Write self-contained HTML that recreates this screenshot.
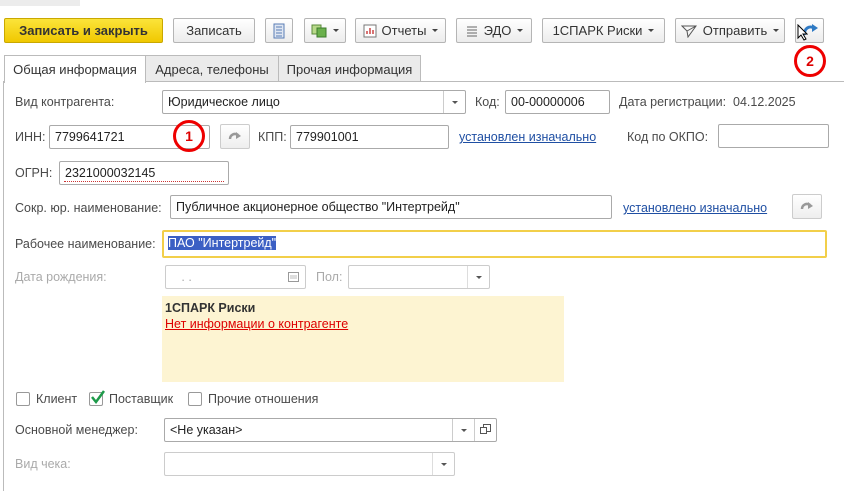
<!DOCTYPE html>
<html><head><meta charset="utf-8"><style>
*{box-sizing:border-box;margin:0;padding:0}
body{width:844px;height:491px;background:#fff;font-family:"Liberation Sans",sans-serif;font-size:12px;color:#333;position:relative;overflow:hidden}
.a{position:absolute}
.btn{position:absolute;top:18px;height:25px;border:1px solid #b5b5b5;border-radius:2px;background:linear-gradient(#fff,#ececec);display:flex;align-items:center;justify-content:center;font-size:13px;color:#333;white-space:nowrap}
.dd::after{content:"";display:inline-block;margin-left:6px;border-left:3px solid transparent;border-right:3px solid transparent;border-top:3px solid #444}
.tab{position:absolute;top:55px;height:27px;border:1px solid #bbb;border-bottom:none;background:#ebebeb;font-size:13px;display:flex;align-items:center;justify-content:center;color:#333}
.lbl{position:absolute;font-size:12.5px;color:#4a4a4a;white-space:nowrap}
.gr{color:#aaa}
.f{position:absolute;height:24px;border:1px solid #aaa;border-radius:2px;background:#fff;font-size:12.5px;color:#222;padding:4px 0 0 5px;white-space:nowrap;overflow:hidden}
.fd{border-color:#ccc}
.arr{position:absolute;right:0;top:0;bottom:0;width:22px;border-left:1px solid #ccc}
.arr::after{content:"";position:absolute;left:8px;top:10px;border-left:3px solid transparent;border-right:3px solid transparent;border-top:3px solid #555}
.lnk{position:absolute;color:#1f4fa3;text-decoration:underline;font-size:12.5px;white-space:nowrap}
.circ{position:absolute;width:32px;height:32px;border:3px solid #e00;border-radius:50%;color:#d00;font-weight:bold;font-size:14px;display:flex;align-items:center;justify-content:center;background:transparent}
.rb{position:absolute;width:30px;height:25px;border:1px solid #ccc;border-radius:2px;background:linear-gradient(#fff,#eee);display:flex;align-items:center;justify-content:center}
.cb{position:absolute;top:392px;width:14px;height:14px;border:1px solid #999;border-radius:2px;background:#fff}
</style></head><body>
<div class="a" style="left:0;top:0;width:80px;height:6px;background:#ececec"></div>

<div class="btn" style="left:4px;width:159px;background:linear-gradient(#fbe43a,#f0c800);border-color:#c9a800;font-weight:bold;color:#333">Записать и закрыть</div>
<div class="btn" style="left:173px;width:82px">Записать</div>
<div class="btn" style="left:265px;width:28px"><svg width="12" height="16"><rect x="1" y="1" width="10" height="14" fill="#dfe6f2" stroke="#5a7db5"/><path d="M3 4h6M3 7h6M3 10h6M3 13h6" stroke="#5a7db5"/></svg></div>
<div class="btn dd" style="left:304px;width:42px"><svg width="16" height="14"><rect x="1" y="1" width="9" height="9" fill="#b8d98a" stroke="#5a8a3a"/><rect x="6" y="4" width="9" height="9" fill="#6ab04c" stroke="#3b7a2a"/></svg></div>
<div class="btn dd" style="left:355px;width:91px"><svg width="14" height="14" style="margin-right:5px"><rect x="1" y="1" width="12" height="12" fill="#fff" stroke="#777"/><path d="M4 10V7M7 10V4M10 10V6" stroke="#c44" stroke-width="1.5"/></svg>Отчеты</div>
<div class="btn dd" style="left:456px;width:76px"><svg width="14" height="14" style="margin-right:5px"><path d="M2 3h10M2 6h10M2 9h10M2 12h10" stroke="#666"/></svg>ЭДО</div>
<div class="btn dd" style="left:542px;width:123px">1СПАРК Риски</div>
<div class="btn dd" style="left:675px;width:110px"><svg width="16" height="14" style="margin-right:6px"><path d="M1 2L15 2L7 13L6 7Z M6 7L15 2" fill="none" stroke="#555"/></svg>Отправить</div>
<div class="btn" style="left:795px;width:29px"><svg width="18" height="16"><path d="M4 12a6 6 0 0 1 9-7" fill="none" stroke="#2f7ac4" stroke-width="3"/><path d="M11 1l6 4-6 4z" fill="#2f7ac4"/></svg></div>
<svg class="a" style="left:797px;top:24px" width="11" height="17"><path d="M1 1v13l3-3 3 5 2-1-3-5h4z" fill="#fff" stroke="#000"/></svg>
<div class="circ" style="left:794px;top:45px">2</div>

<div class="tab" style="left:4px;width:142px;background:#fff;height:28px;z-index:2">Общая информация</div>
<div class="tab" style="left:145px;width:134px">Адреса, телефоны</div>
<div class="tab" style="left:278px;width:143px">Прочая информация</div>
<div class="a" style="left:3px;top:81px;width:841px;height:1px;background:#bbb"></div>
<div class="a" style="left:3px;top:81px;width:1px;height:410px;background:#bbb"></div>

<div class="lbl" style="left:15px;top:95px">Вид контрагента:</div>
<div class="f" style="left:162px;top:90px;width:304px">Юридическое лицо<div class="arr"></div></div>
<div class="lbl" style="left:475px;top:95px">Код:</div>
<div class="f" style="left:505px;top:90px;width:105px">00-00000006</div>
<div class="lbl" style="left:619px;top:95px">Дата регистрации:&nbsp; 04.12.2025</div>

<div class="lbl" style="left:15px;top:130px">ИНН:</div>
<div class="f" style="left:49px;top:125px;width:161px">7799641721</div>
<div class="circ" style="left:173px;top:120px">1</div>
<div class="rb" style="left:220px;top:124px"><svg width="14" height="12"><path d="M2 8a5 5 0 0 1 8-4" fill="none" stroke="#999" stroke-width="2.5"/><path d="M8 1l5 4-5 3z" fill="#999"/></svg></div>
<div class="lbl" style="left:258px;top:130px">КПП:</div>
<div class="f" style="left:290px;top:125px;width:159px">779901001</div>
<div class="lnk" style="left:459px;top:130px">установлен изначально</div>
<div class="lbl" style="left:627px;top:130px">Код по ОКПО:</div>
<div class="f" style="left:718px;top:124px;width:111px"></div>

<div class="lbl" style="left:15px;top:166px">ОГРН:</div>
<div class="f" style="left:59px;top:161px;width:170px">2321000032145<div class="a" style="left:4px;right:4px;bottom:2px;border-bottom:1px dotted #c33"></div></div>

<div class="lbl" style="left:15px;top:201px">Сокр. юр. наименование:</div>
<div class="f" style="left:170px;top:195px;width:442px">Публичное акционерное общество "Интертрейд"</div>
<div class="lnk" style="left:623px;top:201px">установлено изначально</div>
<div class="rb" style="left:792px;top:194px"><svg width="14" height="12"><path d="M2 8a5 5 0 0 1 8-4" fill="none" stroke="#999" stroke-width="2.5"/><path d="M8 1l5 4-5 3z" fill="#999"/></svg></div>

<div class="lbl" style="left:15px;top:237px">Рабочее наименование:</div>
<div class="f" style="left:162px;top:230px;width:665px;height:28px;border:2px solid #f2cf4a;padding:4px 0 0 4px"><span style="background:#3b5fc4;color:#fff">ПАО "Интертрейд"</span></div>

<div class="lbl gr" style="left:15px;top:270px">Дата рождения:</div>
<div class="f fd" style="left:165px;top:265px;width:141px;color:#aaa">&nbsp;&nbsp;&nbsp;. .<svg class="a" style="right:6px;top:5px" width="11" height="11"><rect x="0.5" y="1.5" width="10" height="9" fill="none" stroke="#999"/><path d="M2 5h7M2 7h7" stroke="#bbb"/></svg></div>
<div class="lbl gr" style="left:316px;top:270px">Пол:</div>
<div class="f fd" style="left:348px;top:265px;width:142px"><div class="arr" style="border-color:#ddd"></div></div>

<div class="a" style="left:162px;top:296px;width:402px;height:86px;background:#fdf4d2"></div>
<div class="a" style="left:165px;top:301px;font-weight:bold;font-size:12.5px;color:#333">1СПАРК Риски</div>
<div class="a" style="left:165px;top:317px;font-size:12.5px;color:#d00;text-decoration:underline">Нет информации о контрагенте</div>

<div class="cb" style="left:16px"></div><div class="lbl" style="left:36px;top:392px">Клиент</div>
<div class="cb" style="left:89px"></div><svg class="a" style="left:90px;top:389px" width="16" height="16"><path d="M2 8l4 5 8-11" fill="none" stroke="#1e9a4a" stroke-width="2.5"/></svg><div class="lbl" style="left:109px;top:392px">Поставщик</div>
<div class="cb" style="left:188px"></div><div class="lbl" style="left:208px;top:392px">Прочие отношения</div>

<div class="lbl" style="left:15px;top:423px">Основной менеджер:</div>
<div class="f" style="left:164px;top:418px;width:333px">&lt;Не указан&gt;<div class="arr" style="right:22px"></div><div class="a" style="right:0;top:0;bottom:0;width:22px;border-left:1px solid #ccc"><svg class="a" style="left:5px;top:5px" width="11" height="11"><rect x="3.5" y="0.5" width="7" height="7" fill="#fff" stroke="#555"/><rect x="0.5" y="3.5" width="6" height="6" fill="#fff" stroke="#555"/></svg></div></div>

<div class="lbl gr" style="left:15px;top:457px">Вид чека:</div>
<div class="f fd" style="left:164px;top:452px;width:291px"><div class="arr" style="border-color:#ddd"></div></div>
</body></html>
